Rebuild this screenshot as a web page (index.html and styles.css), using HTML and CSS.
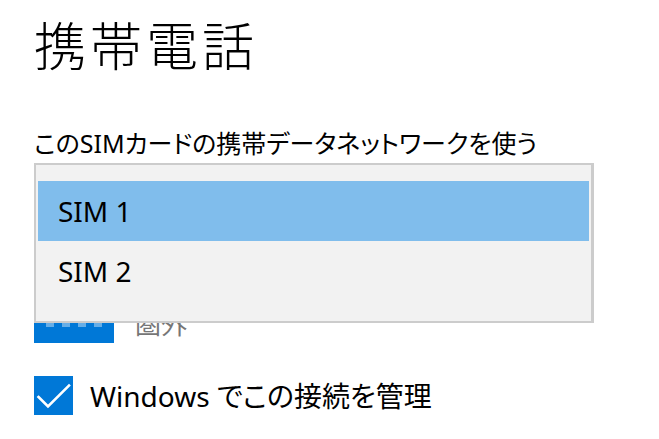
FILE: index.html
```html
<!DOCTYPE html>
<html lang="ja">
<head>
<meta charset="utf-8">
<title>携帯電話</title>
<link rel="stylesheet" href="styles.css">
</head>
<body>
<main class="page">
  <h1 class="title">携帯電話</h1>
  <div class="field">
    <div class="field-label">このSIMカードの携帯データネットワークを使う</div>
    <div class="combo-wrap">
      <div class="combo"></div>
      <ul class="popup">
        <li class="popup-item selected">SIM 1</li>
        <li class="popup-item">SIM 2</li>
      </ul>
    </div>
  </div>
  <div class="status-row">
    <div class="signal-tile">
      <span class="signal-dot"></span>
      <span class="signal-dot"></span>
      <span class="signal-dot"></span>
      <span class="signal-dot"></span>
    </div>
    <span class="status-text">圏外</span>
  </div>
  <div class="check-row">
    <span class="checkbox">
      <svg width="39" height="39" viewBox="0 0 39 39"><path d="M4.5 21 L14 30.5 L35 9.5" fill="none" stroke="#fff" stroke-width="2.6" stroke-linecap="square"/></svg>
    </span>
    <span class="check-text">Windows でこの接続を管理</span>
  </div>
</main>
</body>
</html>
```

FILE: styles.css
```css
html, body {
  margin: 0;
  padding: 0;
  background: #ffffff;
}
body {
  font-family: "Segoe UI", "Noto Sans", "Noto Sans CJK JP", sans-serif;
  color: #000;
  overflow: hidden;
}
.page {
  padding-left: 34px;
  padding-top: 12px;
}
.title {
  margin: 0;
  font-family: "Noto Sans CJK JP", sans-serif;
  font-weight: 300;
  font-size: 52px;
  line-height: 64px;
  letter-spacing: 4px;
}
.field {
  margin-top: 50px;
}
.field-label {
  font-family: "Noto Sans", "Noto Sans CJK JP", sans-serif;
  font-size: 25px;
  line-height: 34px;
  font-feature-settings: "palt";
}
.combo-wrap {
  position: relative;
  height: 138px;
  margin-top: 3px;
}
.combo {
  width: 560px;
  height: 48px;
}
.popup {
  position: absolute;
  top: 0;
  left: 0;
  margin: 0;
  width: 560px;
  height: 160px;
  box-sizing: border-box;
  list-style: none;
  padding: 16px 2px 18px 2px;
  background: #f2f2f2;
  border: 2px solid #cccccc;
  border-right-width: 3px;
}
.popup-item {
  height: 60px;
  padding-left: 20px;
  display: flex;
  align-items: center;
  font-size: 28px;
}
.popup-item.selected {
  background: #80bdec;
}
.status-row {
  display: flex;
  align-items: center;
  gap: 21px;
  height: 42px;
}
.signal-tile {
  width: 80px;
  height: 42px;
  background: #0078d7;
  box-sizing: border-box;
  display: flex;
  gap: 8px;
  padding: 18px 0 0 12px;
}
.signal-dot {
  width: 8px;
  height: 8px;
  background: #66aee7;
}
.status-text {
  font-family: "Noto Sans CJK JP", sans-serif;
  font-size: 26px;
  color: #767676;
}
.check-row {
  display: flex;
  align-items: center;
  gap: 17px;
  margin-top: 32px;
}
.checkbox {
  width: 39px;
  height: 39px;
  background: #0078d7;
  display: block;
}
.checkbox svg {
  display: block;
}
.check-text {
  font-family: "Noto Sans", "Noto Sans CJK JP", sans-serif;
  font-size: 28px;
  font-feature-settings: "palt";
}
```
